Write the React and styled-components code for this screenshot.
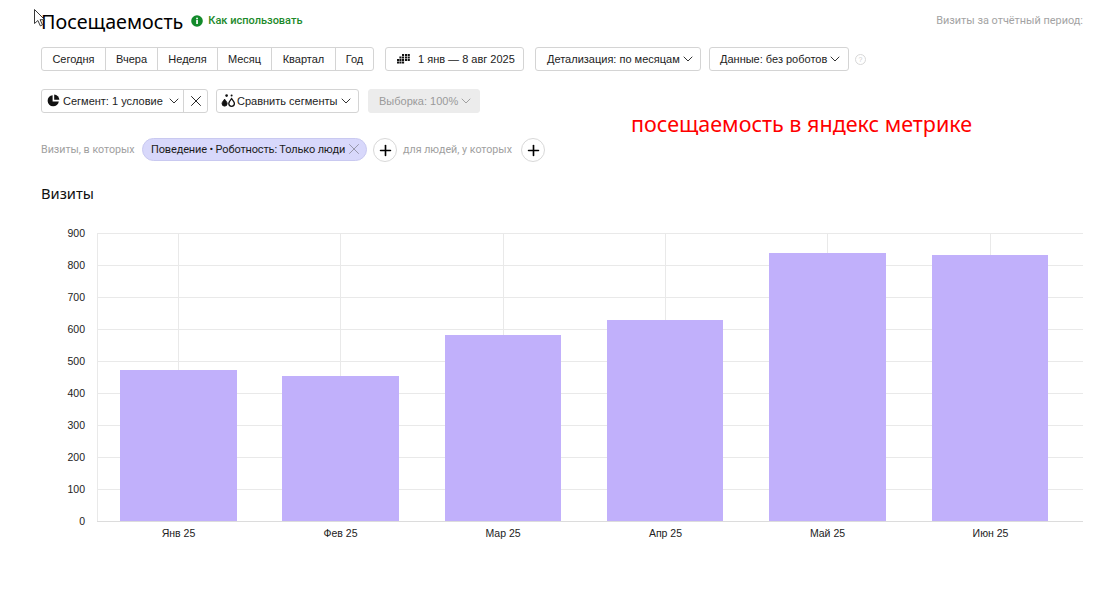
import React from "react";
import styled, { createGlobalStyle } from "styled-components";
import { ChevronDown, X, Plus } from "lucide-react";

const GlobalStyle = createGlobalStyle`
  html, body {
    margin: 0;
    padding: 0;
    background: #fff;
    color: #111;
    font-family: "Liberation Sans", Arial, sans-serif;
  }
`;

const Page = styled.div`
  position: relative;
  width: 1105px;
  height: 594px;
  overflow: hidden;
  box-sizing: border-box;
  padding: 9px 22px 0 41px;
`;

const Header = styled.div`
  display: flex;
  align-items: center;
  height: 26px;
`;

const Title = styled.h1`
  margin: 0;
  font-family: "Noto Sans", sans-serif;
  font-size: 19.7px;
  font-weight: 400;
  line-height: 26px;
  color: #000;
`;

const HowTo = styled.div`
  display: flex;
  align-items: center;
  gap: 5px;
  margin-left: 8px;
  margin-top: -3px;
  font-family: Roboto, sans-serif;
  font-size: 11px;
  font-weight: 500;
  color: #1d8a2b;
`;

const PeriodNote = styled.div`
  margin-left: auto;
  margin-top: -4px;
  font-family: Roboto, sans-serif;
  font-size: 10.9px;
  color: #a3a3a3;
`;

const Toolbar = styled.div`
  display: flex;
  align-items: center;
  height: 24px;
  margin-top: ${(p) => p.$top}px;
`;

const ButtonGroup = styled.div`
  display: flex;
  height: 24px;
  box-sizing: border-box;
  border: 1px solid #d4d4d4;
  border-radius: 3px;
  margin-right: ${(p) => p.$gap || 0}px;
  background: #fff;
`;

const Segment = styled.div`
  display: flex;
  align-items: center;
  justify-content: ${(p) => (p.$start ? "flex-start" : "center")};
  gap: 3px;
  box-sizing: border-box;
  width: ${(p) => p.$w}px;
  padding-left: ${(p) => p.$pad || 0}px;
  padding-bottom: 1px;
  font-size: 11px;
  color: #222;
  white-space: nowrap;
  border-left: ${(p) => (p.$first ? "none" : "1px solid #d4d4d4")};
`;

const Button = styled.div`
  display: flex;
  align-items: center;
  gap: ${(p) => p.$inner || 0}px;
  box-sizing: border-box;
  width: ${(p) => p.$w}px;
  height: 24px;
  padding-left: ${(p) => p.$pad}px;
  padding-bottom: 1px;
  margin-right: ${(p) => p.$gap || 0}px;
  border: 1px solid ${(p) => (p.$muted ? "#ececec" : "#d4d4d4")};
  border-radius: 3px;
  background: ${(p) => (p.$muted ? "#ececec" : "#fff")};
  color: ${(p) => (p.$muted ? "#9a9a9a" : "#222")};
  font-size: 11px;
  white-space: nowrap;
`;

const Hint = styled.div`
  display: flex;
  align-items: center;
  justify-content: center;
  width: 9px;
  height: 9px;
  margin-left: -1px;
  border: 1px solid #d8d8d8;
  border-radius: 50%;
  color: #cfcfcf;
  font-size: 7px;
`;

const FilterRow = styled.div`
  display: flex;
  align-items: center;
  height: 24px;
  margin-top: 25px;
  font-family: Roboto, sans-serif;
`;

const FilterLabel = styled.span`
  width: ${(p) => p.$w}px;
  margin-top: -2px;
  font-size: 10.7px;
  color: #a0a0a0;
  white-space: nowrap;
`;

const Chip = styled.div`
  display: flex;
  align-items: center;
  box-sizing: border-box;
  width: 225px;
  height: 23px;
  padding-left: 8px;
  padding-bottom: 1px;
  margin-right: 6px;
  margin-top: -1px;
  background: #d8d8fb;
  border: 1px solid #c9c9f0;
  border-radius: 12px;
  font-size: 11px;
  letter-spacing: -0.15px;
  color: #1c1c1c;
  white-space: nowrap;
`;

const RoundAdd = styled.div`
  display: flex;
  align-items: center;
  justify-content: center;
  box-sizing: border-box;
  width: 24px;
  height: 24px;
  margin-right: ${(p) => p.$gap || 0}px;
  border: 1px solid #d8d8d8;
  border-radius: 50%;
  color: #000;
`;

const ChartTitle = styled.h2`
  margin: 21px 0 0;
  font-family: "Noto Sans", sans-serif;
  font-size: 14.7px;
  font-weight: 400;
  line-height: 20px;
  color: #111;
`;

const ChartSvg = styled.svg`
  display: block;
  margin: 21px 0 0 -41px;
`;

const Annotation = styled.div`
  position: absolute;
  left: 631px;
  top: 110px;
  font-family: "Noto Sans", sans-serif;
  font-size: 21.5px;
  line-height: 28px;
  color: #f00;
  white-space: nowrap;
`;

const Cursor = styled.svg`
  position: absolute;
  left: 34px;
  top: 9px;
`;

const periods = [
  ["Сегодня", 63],
  ["Вчера", 52],
  ["Неделя", 60],
  ["Месяц", 54],
  ["Квартал", 64],
  ["Год", 38],
];

const PLOT_TOP = 9;
const PLOT_BOTTOM = 297;
const OFFSET = 224;

const bars = [
  { label: "Янв 25", x: 120, w: 117, top: 370, grid: 178.5 },
  { label: "Фев 25", x: 282, w: 117, top: 376, grid: 340.5 },
  { label: "Мар 25", x: 445, w: 116, top: 335, grid: 503 },
  { label: "Апр 25", x: 607, w: 116, top: 320, grid: 665.5 },
  { label: "Май 25", x: 769, w: 117, top: 253, grid: 827.5 },
  { label: "Июн 25", x: 932, w: 116, top: 255, grid: 990.5 },
];

const ticks = [900, 800, 700, 600, 500, 400, 300, 200, 100, 0];

const Chevron = ({ color = "#222" }) => (
  <ChevronDown size={16} strokeWidth={1.4} color={color} />
);

const CalendarDots = () => (
  <svg width="13" height="10" viewBox="0 0 13 10" fill="#111">
    {[
      [5, 0], [8, 0], [10.7, 0],
      [2.4, 2.5], [5, 2.5], [8, 2.5], [10.7, 2.5],
      [0, 5], [2.4, 5], [5, 5], [8, 5], [10.7, 5],
      [0, 7.5], [2.4, 7.5], [5, 7.5],
    ].map(([x, y]) => (
      <rect key={`${x}-${y}`} x={x} y={y} width="2.1" height="2" />
    ))}
  </svg>
);

const PieIcon = () => (
  <svg width="13" height="13" viewBox="0 0 13 13" fill="#111">
    <path d="M5.6 1.2v6.2h6.2A5.6 5.6 0 1 1 5.6 1.2z" />
    <path d="M7.2 0.6a5.4 5.4 0 0 1 5.2 5.2H7.2z" />
  </svg>
);

const DropsIcon = () => (
  <svg width="15" height="13" viewBox="0 0 15 13" fill="none" stroke="#111">
    <path d="M3.6 5.2c1.5 2 2.5 3 2.5 4.4a2.5 2.5 0 0 1-5 0c0-1.4 1-2.4 2.5-4.4z" fill="#111" />
    <path d="M10.6 4.6c1.7 2.2 2.8 3.4 2.8 4.9a2.8 2.8 0 0 1-5.6 0c0-1.5 1.1-2.7 2.8-4.9z" strokeWidth="1.3" />
    <circle cx="5.6" cy="1.6" r="1.3" fill="#111" stroke="none" />
    <circle cx="10.6" cy="1.4" r="1" fill="#111" stroke="none" />
  </svg>
);

const InfoIcon = () => (
  <svg width="12" height="12" viewBox="0 0 12 12">
    <circle cx="6" cy="6" r="5.8" fill="#118a2a" />
    <rect x="5.2" y="5" width="1.7" height="4" fill="#fff" />
    <rect x="5.2" y="2.7" width="1.7" height="1.6" fill="#fff" />
  </svg>
);

const VisitsChart = () => (
  <ChartSvg width="1105" height="330" viewBox="0 0 1105 330">
    {ticks.map((t, i) => {
      const y = PLOT_TOP + i * 32 + 0.5;
      return (
        <g key={t}>
          <line x1="97" x2="1083" y1={y} y2={y} stroke={t === 0 ? "#dcdcdc" : "#e9e9e9"} />
          <text x="85" y={y + 3.5} fontSize="10.5" textAnchor="end" fill="#222" fontFamily="Liberation Sans">
            {t}
          </text>
        </g>
      );
    })}
    <line x1="97.5" x2="97.5" y1={PLOT_TOP} y2={PLOT_BOTTOM} stroke="#e9e9e9" />
    {bars.map((b) => (
      <g key={b.label}>
        <line x1={Math.floor(b.grid) + 0.5} x2={Math.floor(b.grid) + 0.5} y1={PLOT_TOP} y2={PLOT_BOTTOM} stroke="#e9e9e9" />
        <rect x={b.x} y={b.top - OFFSET} width={b.w} height={PLOT_BOTTOM - (b.top - OFFSET)} fill="#c1b0fb" />
        <text x={b.grid} y={PLOT_BOTTOM + 16} fontSize="10.5" textAnchor="middle" fill="#222" fontFamily="Liberation Sans">
          {b.label}
        </text>
      </g>
    ))}
  </ChartSvg>
);

const App = () => {
  return (
    <>
      <GlobalStyle />
      <Page>
        <Header>
          <Title>Посещаемость</Title>
          <HowTo>
            <InfoIcon />
            Как использовать
          </HowTo>
          <PeriodNote>Визиты за отчётный период:</PeriodNote>
        </Header>

        <Toolbar $top={12}>
          <ButtonGroup $gap={11}>
            {periods.map(([name, w], i) => (
              <Segment key={name} $w={w} $first={i === 0}>
                {name}
              </Segment>
            ))}
          </ButtonGroup>
          <Button $w={139} $gap={11} $inner={8} $pad={11}>
            <CalendarDots />
            1 янв — 8 авг 2025
          </Button>
          <Button $w={166} $gap={8} $pad={11}>
            Детализация: по месяцам
            <Chevron />
          </Button>
          <Button $w={140} $gap={7} $pad={10}>
            Данные: без роботов
            <Chevron />
          </Button>
          <Hint>?</Hint>
        </Toolbar>

        <Toolbar $top={18}>
          <ButtonGroup $gap={8}>
            <Segment $w={141} $first $start $pad={5}>
              <PieIcon />
              Сегмент: 1 условие
              <Chevron />
            </Segment>
            <Segment $w={24}>
              <X size={18} strokeWidth={1.3} color="#222" />
            </Segment>
          </ButtonGroup>
          <Button $w={143} $gap={9} $pad={4} $inner={1}>
            <DropsIcon />
            Сравнить сегменты
            <Chevron />
          </Button>
          <Button $w={112} $muted $pad={10}>
            Выборка: 100%
            <Chevron color="#9a9a9a" />
          </Button>
        </Toolbar>

        <FilterRow>
          <FilterLabel $w={101}>Визиты, в которых</FilterLabel>
          <Chip>
            Поведение • Роботность: Только люди
            <X size={18} strokeWidth={1.1} color="#8a8a9a" />
          </Chip>
          <RoundAdd $gap={6}>
            <Plus size={17} strokeWidth={2.3} />
          </RoundAdd>
          <FilterLabel $w={118}>для людей, у которых</FilterLabel>
          <RoundAdd>
            <Plus size={17} strokeWidth={2.3} />
          </RoundAdd>
        </FilterRow>

        <ChartTitle>Визиты</ChartTitle>
        <VisitsChart />

        <Annotation>посещаемость в яндекс метрике</Annotation>
        <Cursor width="12" height="18" viewBox="0 0 12 18">
          <path d="M0.5 0.5v14l3.4-3 2.4 5.4 2.2-1-2.4-5.2h4.6z" fill="#fff" stroke="#222" strokeWidth="0.9" />
        </Cursor>
      </Page>
    </>
  );
};

export default App;
